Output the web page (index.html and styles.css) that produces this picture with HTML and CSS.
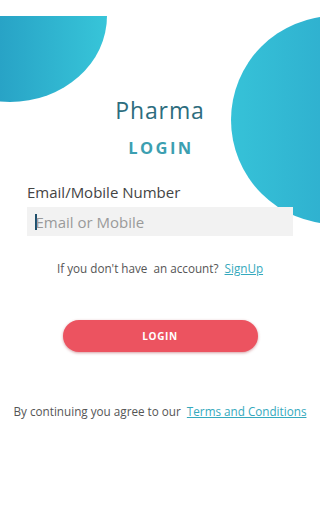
FILE: index.html
```html
<!DOCTYPE html>
<html>
<head>
<meta charset="utf-8">
<link rel="stylesheet" href="styles.css">
</head>
<body>
<div class="screen">
  <svg class="blobs" width="320" height="240" viewBox="0 0 320 240">
    <defs>
      <linearGradient id="gl" x1="0" y1="0" x2="1" y2="0">
        <stop offset="0" stop-color="#28a3c6"/>
        <stop offset="1" stop-color="#37c5d9"/>
      </linearGradient>
      <linearGradient id="gr" x1="0" y1="0" x2="1" y2="0">
        <stop offset="0" stop-color="#36c2d8"/>
        <stop offset="1" stop-color="#279cc5"/>
      </linearGradient>
    </defs>
    <path d="M0 16 H107 A97 86 0 0 1 10 102 A97 86 0 0 1 0 101.5 Z" fill="url(#gl)"/>
    <circle cx="335" cy="120" r="104" fill="url(#gr)"/>
  </svg>
  <main class="content">
    <h1 class="brand">Pharma</h1>
    <h2 class="title">LOGIN</h2>
    <label class="label">Email/Mobile Number</label>
    <div class="input"><span class="caret"></span><span class="placeholder">Email or Mobile</span></div>
    <p class="note">If you don't have&nbsp; an account?&nbsp; <a class="link">SignUp</a></p>
    <button class="btn">LOGIN</button>
    <p class="note terms">By continuing you agree to our&nbsp; <a class="link">Terms and Conditions</a></p>
  </main>
</div>
</body>
</html>
```
FILE: styles.css
```css
html, body {
  margin: 0;
  padding: 0;
  background: #fff;
}
.screen {
  position: relative;
  width: 320px;
  height: 512px;
  overflow: hidden;
  font-family: "Open Sans", "Liberation Sans", sans-serif;
}
.blobs {
  position: absolute;
  top: 0;
  left: 0;
}
.content {
  position: relative;
  display: flex;
  flex-direction: column;
  align-items: center;
  padding-top: 97px;
}
.brand {
  margin: 0;
  font-size: 23px;
  line-height: 26px;
  font-weight: 400;
  color: #2d6d7e;
  letter-spacing: 0.9px;
}
.title {
  margin: 15px 0 0;
  font-size: 16.5px;
  line-height: 20px;
  font-weight: 700;
  color: #3c9fb1;
  letter-spacing: 2.4px;
  padding-left: 2px;
}
.label {
  align-self: flex-start;
  margin: 25px 0 0 27px;
  font-size: 15px;
  line-height: 18px;
  color: #444;
}
.input {
  align-self: flex-start;
  margin: 6px 0 0 27px;
  width: 266px;
  height: 29px;
  background: #f2f2f2;
  display: flex;
  align-items: center;
  padding-left: 8px;
  box-sizing: border-box;
}
.caret {
  width: 1.5px;
  height: 16px;
  background: #1f4f6a;
  margin-right: -1px;
}
.placeholder {
  font-size: 15px;
  color: #9a9a9a;
}
.note {
  margin: 25px 0 0;
  font-size: 11.7px;
  line-height: 14px;
  color: #555;
  white-space: nowrap;
}
.link {
  color: #35a9bd;
  text-decoration: underline;
}
.btn {
  margin-top: 45px;
  width: 195px;
  height: 32px;
  border: none;
  border-radius: 16px;
  background: #ec5360;
  box-shadow: 0 1px 3px rgba(160, 40, 50, 0.45);
  color: #fff;
  font-family: "Open Sans", "Liberation Sans", sans-serif;
  font-size: 10px;
  font-weight: 700;
  letter-spacing: 0.6px;
}
.terms {
  margin-top: 52px;
}
```
